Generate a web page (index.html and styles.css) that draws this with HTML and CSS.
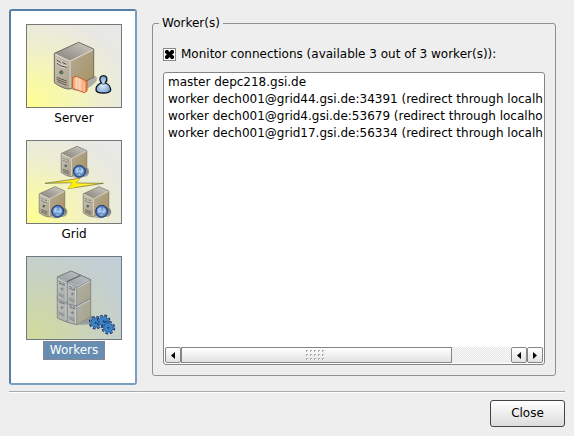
FILE: index.html
```html
<!DOCTYPE html>
<html lang="en">
<head>
<meta charset="utf-8">
<title>Worker(s)</title>
<link rel="stylesheet" href="styles.css">
</head>
<body>
<svg class="defs" aria-hidden="true">
  <defs>
    <linearGradient id="front" x1="0" y1="0" x2="1" y2="1"><stop offset="0" stop-color="#c9c2b3"/><stop offset="1" stop-color="#aaa08c"/></linearGradient>
    <linearGradient id="side" x1="0" y1="0" x2="1" y2="1"><stop offset="0" stop-color="#b5ab98"/><stop offset="1" stop-color="#a4905c"/></linearGradient>
    <linearGradient id="top" x1="0" y1="1" x2="1" y2="0"><stop offset="0" stop-color="#858077"/><stop offset=".5" stop-color="#aaa59c"/><stop offset="1" stop-color="#d2cfc9"/></linearGradient>
    <linearGradient id="book" x1="0" y1="0" x2="1" y2="0"><stop offset="0" stop-color="#f4a878"/><stop offset=".5" stop-color="#fbd3b5"/><stop offset="1" stop-color="#ee7a3c"/></linearGradient>
    <radialGradient id="body" cx=".45" cy=".55" r=".6"><stop offset="0" stop-color="#e4f0fb"/><stop offset="1" stop-color="#6796cc"/></radialGradient>
    <radialGradient id="globe"><stop offset="0" stop-color="#a9c9ea"/><stop offset=".6" stop-color="#527fc0"/><stop offset="1" stop-color="#2f559b"/></radialGradient>
    <symbol id="server" viewBox="0 0 140 150" overflow="visible">
      <path d="M52 143L119 101Q132 103 128 116Q122 126 98 141L78 148Z" fill="#777a85" opacity=".55"/>
      <path d="M48 56L119 21V106L48 141Z" fill="url(#side)"/>
      <path d="M1 34L74 1L119 21L48 56Z" fill="url(#top)"/>
      <path d="M1 34L48 56V141Q28 142 1 122Z" fill="url(#front)"/>
      <path d="M1 34L74 1L119 21V106L48 141Q28 142 1 122Z" fill="none" stroke="#706b61" stroke-width="3"/>
      <path d="M3 37L47 58L117 24M48 58V138" fill="none" stroke="#e0dbcf" stroke-width="3"/>
      <path d="M7 51Q15 60 39 64V72Q17 69 8 59M9 65Q19 77 38 78" fill="none" stroke="#e6e2d9" stroke-width="3"/>
      <path d="M8 54L20 61M25 61L38 67M9 64Q18 73 38 76" fill="none" stroke="#4e4b45" stroke-width="3"/>
      <path d="M8 106L38 117M8 112L38 123M9 118L38 130" stroke="#625b50" stroke-width="3"/>
      <circle cx="22" cy="91" r="5" fill="#527763" stroke="#434e43" stroke-width="2"/>
    </symbol>
    <symbol id="globe-icon" viewBox="-24 -22 52 44" overflow="visible">
      <ellipse cx="12" cy="3" rx="17" ry="14" fill="#555d6b" opacity=".55"/>
      <circle r="18" fill="url(#globe)" stroke="#263f78" stroke-width="3"/>
      <path d="M-12 -7L-5 -12L0 -8L-5 -4L-3 3L-10 5ZM3 -10L11 -8L12 1L6 7L2 2L6 -3ZM-5 8L4 9L0 14Z" fill="#c5e0f5" opacity=".75"/>
      <circle r="13" fill="none" stroke="#8eb4e1" stroke-width="2"/>
    </symbol>
    <symbol id="blade" viewBox="0 0 102 90" overflow="visible">
      <path d="M59 31L101 9V64L59 87Z" fill="url(#side)"/>
      <path d="M31 16L59 31V87L31 80Z" fill="url(#front)"/>
      <path d="M1 1L29 15V79L1 67Z" fill="url(#front)"/>
      <path d="M1 1L29 15V79L1 67ZM31 16L59 31V87L31 80ZM59 31L101 9V64L59 87" fill="none" stroke="#77756f" stroke-width="3"/>
      <path d="M4 6L27 17V74M34 21L56 33V83M61 33L99 13" fill="none" stroke="#ded9cd" stroke-width="3"/>
      <path d="M5 12L13 17M17 16L24 22M6 19L23 25M36 27L44 32M48 31L55 37M37 34L54 40" stroke="#55534e" stroke-width="3"/>
      <path d="M5 49L22 57M5 54L22 62M36 63L53 70M36 68L53 76" stroke="#7a7469" stroke-width="3"/>
      <path d="M11 36H19M15 32V40M42 51H50M46 47V55" stroke="#4b6659" stroke-width="3"/>
    </symbol>
    <symbol id="gear" viewBox="-22 -22 44 44" overflow="visible">
      <circle r="15" fill="none" stroke="#18265f" stroke-width="11" stroke-dasharray="6.8 5"/>
      <circle r="14" fill="#3c84c4" stroke="#213a78" stroke-width="2"/>
      <circle r="15" fill="none" stroke="#3c84c4" stroke-width="6" stroke-dasharray="5.4 6.4"/>
      <circle r="3" fill="#233871"/>
    </symbol>
  </defs>
</svg>

<main class="content">
  <nav class="pages" aria-label="Pages">
    <button class="page" type="button">
      <svg class="picture" viewBox="0 0 282 246" aria-hidden="true">
        <use href="#server" x="81" y="51" width="140" height="150"/>
        <path d="M137 158L148 154L180 168V198L172 203L137 190Z" fill="url(#book)" stroke="#c9602a" stroke-width="3"/>
        <path d="M148 156V192M172 172V201" stroke="#fff0df" stroke-width="2"/>
        <path d="M207 194C207 180 216 177 223 174C214 162 220 152 229 152C239 152 244 163 235 174C245 178 251 182 251 196C251 207 207 207 207 194Z" fill="url(#body)" stroke="#101722" stroke-width="4"/>
        <path d="M221 175Q229 180 237 175" fill="none" stroke="#305a8b" stroke-width="3"/>
      </svg>
      <span class="caption">Server</span>
    </button>
    <button class="page" type="button">
      <svg class="picture" viewBox="0 0 282 246" aria-hidden="true">
        <use href="#server" x="102" y="15" width="91" height="98"/>
        <use href="#globe-icon" x="133" y="69" width="52" height="44"/>
        <use href="#server" x="36" y="136" width="91" height="98"/>
        <use href="#globe-icon" x="68" y="189" width="52" height="44"/>
        <use href="#server" x="168" y="136" width="91" height="98"/>
        <use href="#globe-icon" x="200" y="189" width="52" height="44"/>
        <path d="M54 127L159 112L146 126L229 127L123 143L137 125Z" fill="#fff22b" stroke="#67643b" stroke-width="2"/>
        <path d="M123 143L137 125L124 123L159 112L146 126L157 128L151 137Z" fill="#fff000"/>
      </svg>
      <span class="caption">Grid</span>
    </button>
    <button class="page selected" type="button" aria-current="page">
      <svg class="picture" viewBox="0 0 282 246" aria-hidden="true">
        <path d="M145 203L190 174L214 192Q190 205 155 203Z" fill="#606778" opacity=".5"/>
        <use href="#blade" x="90" y="116" width="102" height="90"/>
        <use href="#blade" x="90" y="60" width="102" height="90"/>
        <path d="M91 60L132 42L191 68L149 91Z" fill="url(#top)" stroke="#67665f" stroke-width="3"/>
        <path d="M120 74L161 55" stroke="#4d4d4b" stroke-width="4"/>
        <path d="M94 62L119 74M124 77L149 88L187 69" fill="none" stroke="#dedbd2" stroke-width="2"/>
        <path class="tint" d="M90 59L132 41L192 68V181L149 207L90 184Z"/>
        <use href="#gear" x="184" y="175" width="44" height="44"/>
        <use href="#gear" x="208" y="171" width="44" height="44"/>
        <use href="#gear" x="222" y="190" width="44" height="44"/>
      </svg>
      <span class="caption">Workers</span>
    </button>
  </nav>

  <fieldset class="group">
    <legend>Worker(s)</legend>
    <label class="monitor"><input type="checkbox" checked>Monitor connections (available 3 out of 3 worker(s)):</label>
    <div class="list">
      <ul class="rows">
        <li>master depc218.gsi.de</li>
        <li>worker dech001@grid44.gsi.de:34391 (redirect through localhost)</li>
        <li>worker dech001@grid4.gsi.de:53679 (redirect through localhost)</li>
        <li>worker dech001@grid17.gsi.de:56334 (redirect through localhost)</li>
      </ul>
      <div class="scrollbar">
        <button class="arrow" type="button" aria-label="Scroll left"><svg viewBox="0 0 4 7"><path d="M4 0V7L0 3.5Z"/></svg></button>
        <div class="track"><div class="thumb"><span class="grip"></span></div></div>
        <button class="arrow" type="button" aria-label="Step left"><svg viewBox="0 0 4 7"><path d="M4 0V7L0 3.5Z"/></svg></button>
        <button class="arrow" type="button" aria-label="Scroll right"><svg viewBox="0 0 4 7"><path d="M0 0V7L4 3.5Z"/></svg></button>
      </div>
    </div>
  </fieldset>
</main>
<footer class="footer">
  <button class="close" type="button">Close</button>
</footer>
</body>
</html>
```

FILE: styles.css
```css
* {
  box-sizing: border-box;
}

body {
  display: flex;
  flex-direction: column;
  min-height: 100vh;
  margin: 0;
  padding: 9px;
  background: #eee;
  color: #000;
  font: 12px/17px "DejaVu Sans", sans-serif;
}

button {
  padding: 0;
  color: inherit;
  font: inherit;
}

.defs {
  position: absolute;
  width: 0;
  height: 0;
}

.content {
  display: grid;
  flex: 1;
  grid-template-columns: 128px minmax(0, 1fr);
  gap: 15px;
  padding-right: 9px;
}

.pages {
  display: flex;
  flex-direction: column;
  align-items: center;
  gap: 13px;
  padding: 13px 0 0 2px;
  border: 2px solid #7b9ebf;
  border-top-color: #557fa6;
  border-left-color: #557fa6;
  border-radius: 3px;
  background: #fff;
}

.page {
  display: flex;
  flex-direction: column;
  align-items: center;
  gap: 2px;
  border: 0;
  background: none;
}

.picture {
  display: block;
  width: 96px;
  height: 84px;
  border: 1px solid #777;
  background: radial-gradient(ellipse at 0 100%, #ffff91 0%, #f8f8ac 25%, #eeeed0 55%, #e8e8e3 80%, #e8e8e8 100%);
}

.selected .picture {
  border-color: #6c7883;
  background: radial-gradient(ellipse at 0 100%, #d3dc9b 0%, #cdd7ab 25%, #c8d2c2 55%, #c3cfd3 80%, #c3ced8 100%);
}

.tint {
  fill: #a9c4de;
  opacity: .3;
}

.caption {
  padding: 0 7px;
}

.selected .caption {
  border: 1px dotted #a08070;
  margin-top: -1px;
  margin-bottom: -1px;
  padding: 0 6px;
  background: #678db2;
  color: #fff;
}

.group {
  display: flex;
  flex-direction: column;
  gap: 9px;
  min-width: 0;
  margin: 6px 0 9px;
  padding: 14px 10px 10px;
  border: 1px solid #8f8f8f;
  border-radius: 3px;
}

.group legend {
  margin-left: -4px;
  padding: 0 3px;
}

.monitor {
  display: flex;
  align-items: center;
  gap: 5px;
}

.monitor input {
  display: grid;
  place-items: center;
  width: 13px;
  height: 13px;
  margin: 0;
  border: 1px solid #888;
  background: #fff;
  appearance: none;
}

.monitor input:checked::before {
  width: 9px;
  height: 9px;
  background: #000;
  clip-path: polygon(0 11%, 11% 0, 33% 0, 50% 22%, 67% 0, 89% 0, 100% 11%, 100% 33%, 78% 50%, 100% 67%, 100% 89%, 89% 100%, 67% 100%, 50% 78%, 33% 100%, 11% 100%, 0 89%, 0 67%, 22% 50%, 0 33%);
  content: "";
}

.list {
  display: flex;
  flex: 1;
  flex-direction: column;
  padding: 1px;
  border: 1px solid #858585;
  border-radius: 3px;
  background: #fff;
}

.rows {
  flex: 1;
  margin: 0;
  padding: 0 0 0 3px;
  overflow: hidden;
  list-style: none;
  white-space: nowrap;
}

.scrollbar {
  display: flex;
  height: 16px;
}

.arrow,
.thumb {
  display: grid;
  place-items: center;
  border: 1px solid #858585;
  background: linear-gradient(#fff, #e2e2e2);
}

.arrow {
  width: 16px;
  border-radius: 2px;
}

.arrow svg {
  width: 4px;
  height: 7px;
}

.track {
  flex: 1;
  background: repeating-conic-gradient(#e8e8e8 0 25%, #f8f8f8 0 50%) 0 0 / 2px 2px;
}

.thumb {
  width: 82%;
  height: 100%;
}

.grip {
  width: 20px;
  height: 11px;
  background: linear-gradient(135deg, #aaa 50%, #fff 50%) 0 0 / 2px 2px;
  mask: conic-gradient(from 270deg at 2px 2px, #000 25%, transparent 0) 0 0 / 4px 4px;
}

.footer {
  display: flex;
  justify-content: flex-end;
  margin-top: 6px;
  padding-top: 8px;
  border-top: 1px solid #aaa;
  box-shadow: inset 0 1px #fff;
}

.close {
  width: 75px;
  height: 27px;
  border: 1px solid #444;
  border-radius: 3px;
  background: linear-gradient(#fff, #dcdcdc);
}
```
